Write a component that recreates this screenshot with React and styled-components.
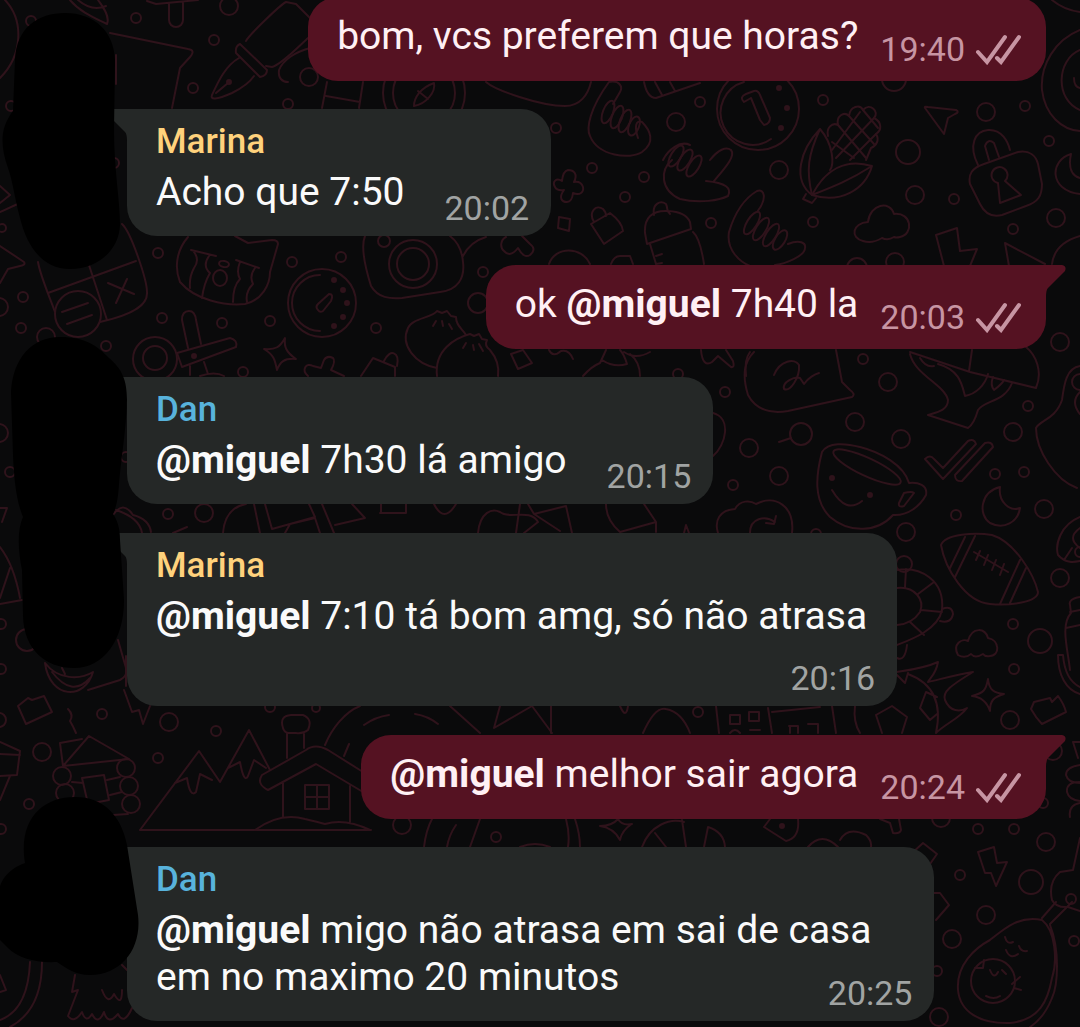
import React from "react";
import styled, { createGlobalStyle } from "styled-components";

const GlobalStyle = createGlobalStyle`
  * {
    box-sizing: border-box;
  }
  body {
    margin: 0;
    background-color: #0a0a0b;
    font-family: Roboto, "Liberation Sans", sans-serif;
  }
`;

const ChatContainer = styled.main`
  position: relative;
  display: flex;
  flex-direction: column;
  justify-content: flex-end;
  width: 100%;
  height: 100vh;
  overflow: hidden;
  background-color: #0a0a0b;
`;

const WallpaperSvg = styled.svg`
  position: absolute;
  top: 0;
  left: 0;
  width: 100%;
  height: 100%;
  fill: none;
  stroke: #2f131b;
  stroke-width: 2;
  stroke-linecap: round;
  stroke-linejoin: round;
`;

const MarkerSvg = styled.svg`
  position: absolute;
  bottom: 0;
  left: 0;
  width: 140px;
  height: 1027px;
  fill: #000;
`;

const MessageList = styled.ul`
  position: relative;
  display: flex;
  flex-direction: column;
  flex-shrink: 0;
  margin: 0;
  padding: 0 34px 6px 127px;
  list-style: none;
`;

const Message = styled.li`
  position: relative;
  align-self: ${({ $own }) => ($own ? "flex-end" : "flex-start")};
  max-width: 90%;
  margin-bottom: ${({ $own }) => ($own ? "28px" : "29px")};
  padding: ${({ $own }) => ($own ? "16px 25px 12px 29px" : "12px 22px 8px 29px")};
  border-radius: 30px;
  border-top-left-radius: ${({ $own }) => ($own ? "30px" : "0")};
  border-top-right-radius: ${({ $own, $tail }) => ($own && $tail ? "0" : "30px")};
  background-color: ${({ $own }) => ($own ? "#551222" : "#252827")};
  color: ${({ $own }) => ($own ? "#fff0f4" : "#fafafa")};

  &:last-child {
    margin-bottom: 0;
  }
`;

const TailSvg = styled.svg`
  position: absolute;
  top: 0;
  width: 21px;
  height: 32px;
  left: ${({ $own }) => ($own ? "auto" : "-20px")};
  right: ${({ $own }) => ($own ? "-20px" : "auto")};
  transform: ${({ $own }) => ($own ? "none" : "scaleX(-1)")};
  fill: ${({ $own }) => ($own ? "#551222" : "#252827")};
`;

const Sender = styled.div`
  margin-bottom: 6px;
  font-size: 35px;
  font-weight: 500;
  line-height: 42px;
  color: ${({ $color }) => $color};
`;

const Body = styled.div`
  display: grid;
  grid-template-columns: ${({ $layout }) => ($layout === "inline" ? "auto auto" : "auto")};
  column-gap: ${({ $own }) => ($own ? "22px" : "40px")};
  row-gap: 6px;
`;

const Text = styled.p`
  grid-area: 1 / 1;
  margin: 0;
  padding-right: ${({ $layout }) => ({ inline: "0", below: "8px", tucked: "41px" })[$layout]};
  padding-bottom: ${({ $own }) => ($own ? "9px" : "12px")};
  font-size: 39px;
  line-height: 47px;
`;

const Line = styled.span`
  display: block;
`;

const Mention = styled.b`
  font-weight: 700;
`;

const Meta = styled.div`
  grid-area: ${({ $layout }) =>
    ({ inline: "1 / 2", below: "2 / 1", tucked: "1 / 1" })[$layout]};
  align-self: end;
  justify-self: end;
  display: flex;
  align-items: center;
  gap: 10px;
  font-size: 34px;
  line-height: 40px;
  color: ${({ $own }) => ($own ? "#c795a3" : "#a1a4a3")};
`;

const TicksSvg = styled.svg`
  width: 46px;
  height: 32px;
  fill: none;
  stroke: currentColor;
  stroke-width: 4;
  stroke-linecap: round;
`;

const messages = [
  { own: true, lines: ["bom, vcs preferem que horas?"], time: "19:40" },
  { sender: "Marina", tail: true, lines: ["Acho que 7:50"], time: "20:02" },
  { own: true, tail: true, lines: ["ok @miguel 7h40 la"], time: "20:03" },
  { sender: "Dan", tail: true, lines: ["@miguel 7h30 lá amigo"], time: "20:15" },
  {
    sender: "Marina",
    tail: true,
    layout: "below",
    lines: ["@miguel 7:10 tá bom amg, só não atrasa"],
    time: "20:16",
  },
  { own: true, tail: true, lines: ["@miguel melhor sair agora"], time: "20:24" },
  {
    sender: "Dan",
    tail: true,
    layout: "tucked",
    lines: ["@miguel migo não atrasa em sai de casa", "em no maximo 20 minutos"],
    time: "20:25",
  },
];

const senderColors = { Marina: "#ffd27c", Dan: "#58b3dc" };

// x, y, radius
const bubbles = [
  [31, 21, 5], [136, 18, 5], [214, 40, 5], [193, 88, 5], [288, 104, 5], [309, 77, 9],
  [11, 106, 5], [2, 228, 4], [158, 253, 5], [292, 262, 5], [341, 257, 5], [23, 297, 5],
  [21, 328, 5], [-1, 307, 9], [162, 318, 5], [222, 323, 5], [270, 321, 5], [114, 163, 5],
  [229, 6, 9], [556, 128, 5], [592, 168, 5], [644, 177, 5], [625, 197, 5], [676, 122, 9],
  [384, 241, 6], [483, 272, 5], [700, 102, 5], [823, 100, 5], [779, 170, 9], [908, 152, 12],
  [915, 195, 9], [954, 199, 5], [813, 222, 5], [711, 223, 5], [986, 112, 9], [1025, 106, 5],
  [1049, 141, 5], [1056, 218, 9], [1013, 229, 5], [895, 262, 9], [857, 268, 10], [894, 79, 12],
  [106, 346, 5], [243, 372, 5], [376, 328, 5], [46, 337, 9], [-1, 433, 9], [10, 472, 5],
  [168, 514, 5], [204, 513, 9], [126, 457, 5], [478, 303, 10], [725, 392, 5], [678, 374, 5],
  [733, 485, 5], [863, 359, 5], [888, 382, 9], [855, 422, 9], [901, 439, 9], [801, 434, 11],
  [749, 448, 9], [779, 476, 9], [1060, 342, 9], [1028, 406, 5], [1013, 432, 9], [995, 474, 5],
  [1024, 472, 5], [956, 515, 5], [1044, 509, 9], [906, 532, 9], [1060, 578, 9], [1080, 382, 8],
  [816, 534, 5], [1, 624, 5], [27, 640, 11], [1, 669, 5], [-1, 720, 7], [42, 752, 9],
  [102, 714, 5], [169, 722, 9], [216, 731, 5], [158, 758, 5], [29, 804, 5], [1, 829, 5],
  [1013, 624, 5], [1040, 641, 12], [1014, 669, 5], [1010, 720, 9], [698, 712, 5],
  [978, 829, 5], [1014, 829, 5], [1046, 842, 9], [941, 818, 9], [1053, 751, 9], [1043, 803, 5],
  [496, 837, 5], [402, 825, 9], [960, 875, 5], [1031, 882, 12], [986, 915, 9], [952, 939, 9],
  [937, 971, 5], [939, 1017, 9], [1074, 941, 5], [1071, 899, 5], [270, 707, 5], [316, 708, 4],
];

const doodles = [
  // planet, leaf, note, popsicle
  "M5,0 C24,20 23,55 0,78",
  "M70,0 C80,12 95,18 107,24 C110,17 104,8 98,0 M78,0 q14,12 28,6",
  "M110,33 L188,49 Q196,50 190,57 L180,68 L172,108 M116,55 V84",
  "M147,1 L156,4 L198,0 M169,4 V20 a6,6 0 0 0 14,0 V2",
  // fountain pen
  "M310,18 L296,4 L286,2 C280,5 248,36 246,41 M266,66 L272,67 C282,64 300,45 308,38",
  "M240,44 L267,70 q0,6 -7,7 L236,53 q-1,-7 4,-9z",
  "M239,58 C225,66 218,82 212,95 C210,100 216,100 232,93 C242,88 250,82 254,76 M216,93 L228,83",
  "M310,48 C295,52 283,60 279,70 C278,78 282,82 288,82",
  "M327,82 L322,108 M363,82 L359,108 M326,96 L360,102",
  "M414,106 C414,98 420,88 434,83 C436,92 426,104 414,106 M418,91 L428,99",
  "M486,82 C495,90 540,106 565,106 C580,106 588,95 591,82",
  // call me hands
  "M609,82 C590,108 586,128 590,136 C598,156 630,160 642,152 C656,142 650,130 642,122 C636,120 634,126 638,138 M609,82 C620,80 623,87 620,92 L613,104",
  "M644,82 C646,92 650,98 656,98 L700,83 M655,82 L662,95 M670,82 L675,91",
  "M672,160 C660,170 660,190 680,199 C700,204 720,200 728,196 C732,188 726,183 706,181 M710,160 C718,150 726,146 731,150 C736,156 725,168 714,181 M690,145 C680,140 668,150 663,160",
  "M757,212 C768,198 764,188 757,191 C745,198 735,212 729,232 C726,250 740,262 750,266 M788,244 C800,239 806,243 805,248 C805,256 785,264 775,265",
  // stop watch face
  "M771,139 A32,32 0 1 1 744,82 M744,102 q-5,-5 2,-8 l8,-3 q4,-1 6,4 l10,23 q0,6 -6,7 l-4,-5 l-9,-22 z",
  // corn
  "M820,129 C800,150 792,180 812,195 C806,170 808,155 820,129 C834,145 834,165 830,170",
  "M812,195 C825,170 845,158 872,166 C865,190 840,204 812,195 C835,186 850,180 872,166 M806,194 L803,199 L812,203 L816,198",
  "M828,136 C826,128 832,122 838,125 C836,116 844,111 849,116 C850,106 860,104 863,110 C870,102 880,112 874,118 C882,122 882,130 876,134 C880,140 876,146 871,148 L866,160",
  "M838,125 L866,158 M849,116 L874,144 M863,110 L878,128 M832,142 L854,158 M832,150 L860,112 M836,158 L874,118 M850,160 L876,134",
  "M925,108 q-1,-2 3,-1 L956,110 q4,2 -1,4 L948,118 L944,134 z",
  // lock
  "M978,165 C968,145 975,131 988,130 C1002,129 1008,142 1010,150 M989,160 L985,146 q3,-8 9,-3 L999,157",
  "M984,164 L1018,152 C1030,150 1036,156 1038,164 L1042,184 C1042,196 1038,202 1026,206 L1002,215 C990,218 984,212 980,204 L970,184 C968,174 972,168 984,164",
  "M998,183 L1000,203 L1021,195 L1005,181 A8,8 0 1 0 998,183",
  "M1071,154 C1050,160 1048,190 1080,194 M1071,154 C1068,168 1072,176 1080,178",
  "M1080,30 C1055,40 1040,65 1042,90 C1045,115 1062,130 1080,131 M1080,50 C1056,60 1055,100 1080,110 M1074,78 q0,9 6,10 M1052,0 Q1064,10 1080,12",
  // cloud and bolt
  "M863,241 C850,238 852,223 868,222 C870,204 890,200 894,214 C912,212 914,234 900,237 q-4,1 -6,0 q-6,4 -12,1 q-10,6 -19,3",
  "M944,266 L936,235 L957,228 L960,251 L977,249 L970,266 M1009,266 L1005,243 L1045,264 M1052,264 C1054,248 1066,240 1080,236",
  "M562,181 C556,177 552,182 555,187 Q557,191 564,190 C558,198 562,202 567,202 Q572,202 573,193 C580,196 584,192 583,187 Q581,181 574,182 C578,174 574,170 568,170 Q563,171 562,181z",
  "M559,217 L570,219 L569,231 L558,228z M591,224 L610,213 Q622,222 623,231 L604,244z M594,222 C588,212 596,204 603,209 Q606,212 606,216",
  "M654,215 C652,204 660,200 666,204 C668,208 666,211 670,214 M645,233 C644,218 652,210 668,211 Q686,212 690,222 L691,229 L647,244z M650,244 L656,264 M656,256 l6,-2 M656,264 l6,-1 M693,232 Q700,238 704,264",
  "M506,237 C500,240 500,248 504,251 Q510,258 518,248 Q524,259 530,255 Q537,249 530,244 L522,236 M549,264 C555,246 582,246 590,264 M611,264 q3,-8 9,-8 h10 l3,8",
  "M365,236 C360,248 366,270 371,286 C378,298 390,299 402,298 L440,292 C458,290 465,278 463,262 C462,250 458,242 450,236 M463,256 C468,246 476,240 486,237",
  // board game card
  "M38,262 C40,275 50,298 55,312 M122,224 C131,232 147,280 147,292 C148,304 136,314 100,322 M88,262 L107,320 M48,293 L136,261 M62,312 L88,303 M67,324 L92,315 M108,283 L134,294 M127,279 L116,303",
  "M0,186 L10,195 L0,203 M0,212 L22,202 M0,246 L24,262 Q26,265 20,266 L8,269 L0,283",
  // ramen bowl
  "M188,237 C175,252 175,270 180,282 C195,300 225,306 245,304 C262,300 270,285 270,272 L278,244 Q278,240 272,240 L248,243 L235,236",
  "M191,250 L216,256 M194,252 q6,8 0,16 q-5,9 -4,20 M209,256 q-7,10 1,17 q-6,10 -8,25 M236,260 L259,268 M240,262 q-4,10 0,17 q-7,7 -7,23 M255,268 q-6,8 -2,16 q-8,8 -6,18",
  "M320,275 A28,28 0 0 0 320,331 M318,310 q-3,-3 0,-6 l11,-10 q5,0 2,7 l-8,10 q-3,2 -5,-1z",
  // propeller
  "M188,348 L182,320 q0,-9 7,-9 q6,0 7,9 L201,344 M177,353 L230,338 q8,2 6,9 L182,367 z M190,366 v9 M204,362 l4,12 M200,376 q15,-5 24,0",
  "M285,338 C284,347 286,352 296,359 C284,358 280,362 277,370 C275,360 274,355 264,349 C276,350 280,347 285,338z",
  "M308,376 C301,370 306,362 313,366 L321,368 L324,360 Q327,355 333,358 Q336,361 331,370 L344,376 M361,376 L373,358 L395,367 L395,376 M384,361 C390,348 400,352 397,366",
  // dumplings
  "M437,368 C415,364 400,345 408,328 C412,318 432,318 437,311 l5,2 l5,-2 l4,5 l5,1 C456,326 462,328 466,335 M437,376 C434,350 455,338 470,334 l4,2 l5,-2 l3,5 l5,1 Q484,346 490,350 Q500,362 498,376",
  "M436,321 l-3,5 M442,321 l1,5 M449,324 l3,5 M466,343 l-3,5 M473,345 l1,5 M479,344 l4,7",
  "M511,354 L523,350 L532,363 L518,369z M549,350 q4,8 12,1 q8,-2 12,8 M583,376 Q592,366 600,363 L606,350 M602,360 Q614,368 627,364 Q624,354 620,350 M630,354 Q640,362 640,376 M624,352 q12,8 26,0",
  "M701,350 C702,362 706,366 712,362 L718,356 L731,367 Q735,368 733,361 L726,350 M746,376 Q744,360 750,352",
  // signed note
  "M754,352 C744,362 742,375 748,395 C756,410 770,414 788,411 L852,397 Q856,394 850,390 L842,382 L836,350",
  "M774,375 C780,360 795,358 799,365 C800,378 790,392 784,389 C782,382 795,376 800,378 L804,384 C808,378 815,374 819,373",
  // space ship
  "M910,352 L970,372 L1036,388 C1043,372 1036,355 1026,347 M972,350 L969,371 M910,354 C915,375 945,385 948,400 C948,410 938,412 928,415 L968,428 Q974,424 978,410 C985,400 1005,402 1012,383",
  "M920,358 Q926,368 934,366 M938,364 C960,370 962,385 965,396 C976,394 985,385 988,374 M993,377 Q990,385 994,390 Q1002,384 1004,380",
  "M1080,366 C1066,368 1064,385 1062,400 C1055,420 1040,420 1036,428 C1036,450 1055,480 1077,488 M1080,392 q-10,10 0,22",
  "M713,413 C732,418 726,445 713,456 M779,442 L791,438",
  // tea cup
  "M822,452 C816,475 813,500 830,517 C850,534 878,532 893,515 C908,516 920,506 926,495 C928,485 918,482 909,483 C904,465 880,452 860,447 C845,443 828,442 822,452 M832,490 Q846,514 862,501 M904,493 Q912,491 914,493 L904,506 Q898,508 899,503z",
  // double check
  "M925,459 q5,-5 9,0 l9,9 l25,-27 q6,-3 8,3 l-33,35 z M955,475 l30,-32 q7,-2 8,4 l-31,34 q-7,1 -7,-6",
  "M1000,487 C980,492 978,515 990,523 C1004,530 1018,522 1020,508 C1010,512 998,502 1000,487z",
  "M718,533 C714,520 720,510 735,509 C740,500 750,500 756,504 C775,494 795,506 792,533 M750,533 C750,518 765,515 775,522 M776,516 l-2,8 l-8,-1",
  // football
  "M941,545 C945,534 975,532 992,535 C1015,542 1034,575 1038,592 C1038,602 1010,606 990,604 C965,602 945,568 941,545 M965,537 L950,568 M975,536 L955,577 M1020,560 L1000,604 M1026,568 L1010,603 M974,552 L1008,572 M980,551 l-4,9 M988,555 l-4,10 M996,560 l-4,10 M1004,564 l-4,11",
  // turtle
  "M897,570 C920,566 945,580 942,610 C938,630 910,640 897,645 M897,588 C915,586 925,600 920,612 Q912,624 897,625 M906,569 L905,587 M934,582 L918,594 M942,612 L921,610 M924,635 L910,622 M942,609 q10,-4 11,5 q-2,10 -13,7 M897,658 Q905,662 907,645",
  "M958,655 C952,644 962,638 968,641 C972,626 986,628 988,638 C1000,640 1000,656 990,656 q-5,1 -7,-2 q-8,5 -12,0 q-6,5 -13,1z",
  "M1080,517 C1060,525 1055,545 1058,555 C1066,564 1075,562 1080,561 M1080,528 q-14,10 0,20 M1064,560 l8,-12 M1080,597 q-12,2 -10,8 l1,8 C1060,625 1068,650 1070,670 M1070,612 l10,-2 M1066,628 l14,-3",
  "M988,679 C989,690 994,693 1004,694 C994,697 990,700 990,711 C987,702 982,697 972,696 C984,693 986,690 988,679z M1034,702 L1050,698 L1052,702 L1058,696 Q1064,704 1066,712 L1042,724 Q1036,718 1031,709z",
  "M1058,655 h5 q2,25 17,32 M1058,655 C1058,675 1066,690 1080,694",
  // flaming ball
  "M897,672 C910,670 925,668 938,662 C936,674 930,678 928,682 C945,678 960,674 973,672 C950,686 942,692 945,700 C950,712 960,712 967,708 C960,718 945,724 936,733 M897,675 l8,8 l3,-10 M908,674 C935,684 942,705 936,733 M926,692 L937,697 M926,692 L920,708 L930,720 L937,714 M876,715 L892,706 L907,717 L902,733 M876,715 L882,733 M855,706 q-2,16 5,27",
  "M716,706 L719,733 M768,708 L772,733 M832,706 L836,733 M772,712 L820,707 M730,715 h10 v9 h-10z M749,712 h10 v9 h-10z M789,726 h9 v7 M808,724 h10 v9 M730,733 q5,-6 10,0 M750,730 h10 M790,733 v-7",
  // strips between the messages
  "M113,515 q10,-15 20,0 q16,4 18,17 M116,510 C128,514 140,520 142,533 M173,533 l14,-6 M223,533 Q225,508 246,504 M254,504 L260,533 M265,504 L272,529 L315,517 L309,504 M285,533 L290,524 L315,518 L320,533 M322,504 L334,533 M335,525 L365,518 L352,504 M380,513 h26 v-9 M381,504 v9 M434,504 q10,20 22,0",
  "M478,533 C480,512 492,508 500,512 C510,520 530,508 538,522 L524,533 M520,504 L516,533 M528,504 L534,514 L566,506 L572,533 M534,514 L560,531 M606,504 Q606,520 620,532 L656,522 L644,504 M656,522 v10 M684,533 l2,-8 l3,8",
  // fruit and mug
  "M45,663 C50,700 85,700 93,672 C80,680 58,680 45,663 M52,672 q20,26 38,6 M62,668 l3,6 M88,690 L120,680 Q128,676 126,668 L118,640 M126,656 v30",
  "M18,706 L28,698 L32,700 L44,696 L52,712 L26,724z M68,709 q6,6 2,12 q3,5 6,12 M124,690 L132,712 L139,710 L143,724 L150,706",
  "M0,742 L20,751 L17,775 L0,776 M0,754 L20,755 M10,776 L0,800 M0,547 Q14,565 20,598 M0,598 L10,568 M0,604 L22,600 M0,508 L7,508 L2,522",
  // log cabin
  "M63,766 L60,743 L82,739 M63,766 L89,736 L129,759z M72,782 L83,783 M82,778 L104,775 L109,800 L88,804z M107,780 L120,777 M110,795 L122,792 M113,815 L128,814",
  // mountains and chalet
  "M140,830 L199,751 L220,782 L249,730 L270,770 M140,830 H371 M175,783 L187,778 Q190,798 196,792 L200,774 L212,780 M228,768 L240,762 Q244,784 248,776 L254,760 L266,768",
  "M268,790 Q256,784 262,775 L306,750 Q315,743 328,750 L363,772 M268,790 L316,764 L363,792 M283,782 V816 M350,786 V822 M255,830 Q280,812 305,819 Q318,822 325,824 Q345,818 370,830 M305,785 h24 v24 h-24z M317,785 v24 M305,797 h24 M283,728 q-4,-12 8,-13 h12 q10,4 5,15 q-5,4 -12,3 h-8 q-4,-1 -5,-5z M287,734 V758 M304,734 V748",
  "M325,745 C332,728 345,712 360,706 M364,725 Q375,717 389,715 M344,756 L349,744 M415,714 Q428,716 438,724 M450,706 L480,733 M500,706 L494,728 L532,706 M532,706 L552,733 M551,706 V733 M620,706 q6,14 8,0 M643,733 Q655,706 666,709 Q682,712 690,733",
  "M424,847 Q426,830 432,819 M447,847 Q449,835 456,825 M470,847 L480,819 M566,819 Q570,834 568,847 M580,847 Q580,834 575,819 M520,847 q15,-6 30,0 M600,826 Q612,826 618,819 Q622,826 632,824 Q622,830 620,840 Q614,828 600,826",
  "M642,847 C650,825 670,818 684,822 M655,833 L666,847 M682,820 L686,847 M704,847 L708,827 Q724,832 725,847 M764,827 L770,819 M764,827 L786,841 Q800,838 798,819 M808,847 q14,-16 30,0 M840,840 q8,-14 26,-5 q6,6 5,12 M880,819 L890,823 L893,833 Q900,834 901,830 L899,819",
  "M910,855 L923,843 L937,854 L930,864 M978,852 L994,847 L997,863 L1007,862 L996,886 L991,873 L985,873z M934,893 L940,893 L949,905 L936,920",
  "M1073,742 h7 M1073,742 L1078,758 M1080,765 q-14,2 -14,10 q2,8 14,8 M1080,782 q-14,0 -13,10 q2,8 13,9 M1080,803 q-12,2 -10,14 M1080,838 L1073,870 L1060,872 Q1048,882 1052,900 Q1056,908 1068,907 L1080,911",
  // avocado
  "M958,990 C956,965 975,948 990,940 C1005,928 1020,915 1042,920 C1055,930 1058,960 1052,978 C1048,1000 1040,1020 1010,1023 C980,1024 960,1012 958,990 M1050,925 C1060,950 1058,985 1052,998 Q1044,1018 1030,1027 M1042,918 L1056,902 M1050,924 L1072,902 M1005,937 q2,8 8,5 M1019,946 q2,6 8,5 M1006,950 q4,10 12,4 M975,968 l8,0 l1,-8 M990,970 q4,10 8,2 M1012,984 l8,-7 M1014,988 l7,2 M986,996 q8,4 14,0 M1002,970 l4,4",
  "M0,975 L6,990 L0,992 M0,1020 Q28,1010 30,962 M10,1027 Q42,1010 42,962 M75,975 L72,992 L78,990 L68,1016 Q74,1024 82,1012 Q86,1024 92,1014 Q98,1026 104,1012 Q108,1026 118,1014 Q124,1026 132,1008 M102,990 q6,16 12,4 q8,14 8,-4 M122,965 l5,5",
];

const ellipses = [
  [608, 112, 5, 12, 22], [617, 117, 5, 12, 22], [625, 121, 5, 12, 22], [634, 126, 5, 10, 22],
  [676, 156, 5, 12, 32], [685, 160, 5, 12, 32], [694, 166, 5, 12, 32],
  [752, 223, 5, 13, 32], [761, 229, 5, 13, 32], [771, 235, 5, 13, 32], [780, 240, 5, 11, 32],
  [867, 467, 37, 9, 25], [224, 264, 5, 3, 10], [220, 278, 7, 8, 0],
];

const rings = [
  [758, 109, 41], [424, 93, 41], [424, 93, 31], [413, 264, 24], [413, 264, 16], [78, 314, 23],
  [322, 303, 34], [155, 359, 22], [155, 358, 12], [62, 776, 9], [126, 768, 9], [65, 793, 9],
  [129, 786, 9], [131, 804, 9], [993, 981, 22], [904, 564, 8], [1080, 552, 5],
];

const dots = [
  [779, 88], [787, 108], [781, 128], [334, 280], [343, 290], [347, 303], [343, 317], [334, 326],
  [832, 478], [870, 495], [229, 82], [782, 826], [194, 356],
];

const Wallpaper = () => (
  <WallpaperSvg viewBox="0 0 1080 1027" preserveAspectRatio="xMinYMin slice" aria-hidden="true">
    {[...bubbles, ...rings].map(([x, y, r]) => (
      <circle key={`${x}-${y}-${r}`} cx={x} cy={y} r={r} />
    ))}
    {ellipses.map(([x, y, rx, ry, angle]) => (
      <ellipse key={`${x}-${y}`} cx={x} cy={y} rx={rx} ry={ry} transform={`rotate(${angle} ${x} ${y})`} />
    ))}
    {dots.map(([x, y]) => (
      <circle key={`${x}-${y}`} cx={x} cy={y} r="2" fill="#2f131b" />
    ))}
    {doodles.map((d) => (
      <path key={d} d={d} />
    ))}
  </WallpaperSvg>
);

// thick marker strokes that hide the avatars
const MarkerStrokes = () => (
  <MarkerSvg viewBox="0 0 140 1027" aria-hidden="true">
    <path d="M15,60 C16,28 38,13 65,13 C95,13 114,32 115,60 L114,130 C114,170 120,200 120,225 C119,250 98,269 70,269 C42,269 27,246 20,218 C14,195 13,182 8,168 C0,145 0,128 13,111 Z" />
    <path d="M11,392 C13,358 32,337 60,337 C86,337 97,346 109,358 C122,369 127,380 127,400 C126,432 121,458 119,484 C118,500 116,508 113,514 C117,520 120,527 120,540 L124,600 C124,640 104,668 74,668 C46,668 24,650 23,616 L22,570 C18,550 17,530 23,517 C16,500 14,478 13,455 Z" />
    <path d="M25,863 C18,820 42,797 75,797 C103,797 121,815 127,845 L138,915 C142,948 122,975 90,975 C75,975 66,968 57,962 C35,963 18,958 8,948 L0,940 V886 C4,875 13,867 25,863 Z" />
  </MarkerSvg>
);

const Ticks = () => (
  <TicksSvg viewBox="0 0 46 32" role="img" aria-label="Entregue">
    <path d="M3,19 L12,29 L30,4" />
    <path d="M22,25 L26,29 L44,4" />
  </TicksSvg>
);

const MessageLine = ({ text }) => (
  <Line>
    {text
      .split(/(@\w+)/)
      .map((part, i) => (part.startsWith("@") ? <Mention key={i}>{part}</Mention> : part))}
  </Line>
);

const MessageBubble = ({ own, tail, sender, lines, time, layout = "inline" }) => (
  <Message $own={own} $tail={tail}>
    {tail && (
      <TailSvg $own={own} viewBox="0 0 21 32" aria-hidden="true">
        <path d="M0,0 H17 Q22,1 20,6 L3,23 Q1,25 1,32 H0 Z" />
      </TailSvg>
    )}
    {sender && <Sender $color={senderColors[sender]}>{sender}</Sender>}
    <Body $own={own} $layout={layout}>
      <Text $own={own} $layout={layout}>
        {lines.map((line) => (
          <MessageLine key={line} text={line} />
        ))}
      </Text>
      <Meta $own={own} $layout={layout}>
        <time>{time}</time>
        {own && <Ticks />}
      </Meta>
    </Body>
  </Message>
);

const App = () => {
  return (
    <>
      <GlobalStyle />
      <ChatContainer>
        <Wallpaper />
        <MessageList>
          {messages.map((message) => (
            <MessageBubble key={message.time} {...message} />
          ))}
        </MessageList>
        <MarkerStrokes />
      </ChatContainer>
    </>
  );
};

export default App;
